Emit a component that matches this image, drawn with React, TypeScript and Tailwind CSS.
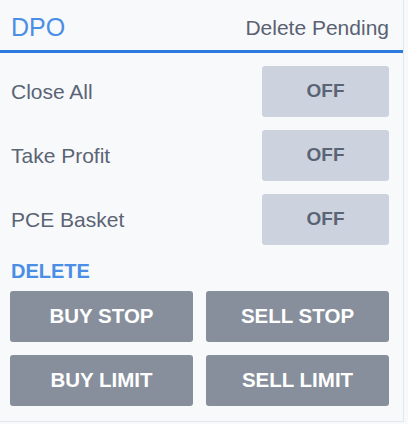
import React, { useState } from 'react';

type Toggle = { label: string; on: boolean };

const App: React.FC = () => {
  const [toggles, setToggles] = useState<Toggle[]>([
    { label: 'Close All', on: false },
    { label: 'Take Profit', on: false },
    { label: 'PCE Basket', on: false },
  ]);

  const actions = ['BUY STOP', 'SELL STOP', 'BUY LIMIT', 'SELL LIMIT'];

  const flip = (i: number) =>
    setToggles(prev => prev.map((t, j) => (j === i ? { ...t, on: !t.on } : t)));

  return (
    <div className="w-[408px] h-[424px] bg-[#f8f9fb] font-['Liberation_Sans',Arial,sans-serif] overflow-hidden">
      <div className="w-[404px] h-[422px] border-r border-b border-[#e3e6eb] flex flex-col">
        {/* Header */}
        <div className="h-[53px] flex items-end justify-between pl-[11px] pr-[14px] pb-[10px] border-b-[3px] border-[#2c7be3]">
          <span className="text-[25px] leading-none text-[#4b8ee6]">DPO</span>
          <span className="text-[21px] leading-none text-[#5a6272] mb-[2px]">Delete Pending</span>
        </div>

        {/* Toggles */}
        <div className="flex flex-col gap-[13px] mt-[13px] pl-[11px] pr-[14px]">
          {toggles.map((t, i) => (
            <div key={t.label} className="flex items-center justify-between h-[51px]">
              <span className="text-[21px] text-[#5b6475]">{t.label}</span>
              <button
                onClick={() => flip(i)}
                className="w-[127px] h-[51px] rounded-[3px] bg-[#cdd3de] text-[19px] font-bold text-[#5b6475]"
              >
                {t.on ? 'ON' : 'OFF'}
              </button>
            </div>
          ))}
        </div>

        {/* Delete section */}
        <div className="pl-[11px] pt-[16px] text-[20px] font-bold leading-none text-[#4b8ee6]">DELETE</div>
        <div className="grid grid-cols-2 gap-[13px] mt-[10px] pl-[10px] pr-[14px]">
          {actions.map(a => (
            <button
              key={a}
              className="h-[51px] rounded-[3px] bg-[#878f9d] text-white text-[20.5px] font-bold"
            >
              {a}
            </button>
          ))}
        </div>
      </div>
    </div>
  );
};

export default App;
